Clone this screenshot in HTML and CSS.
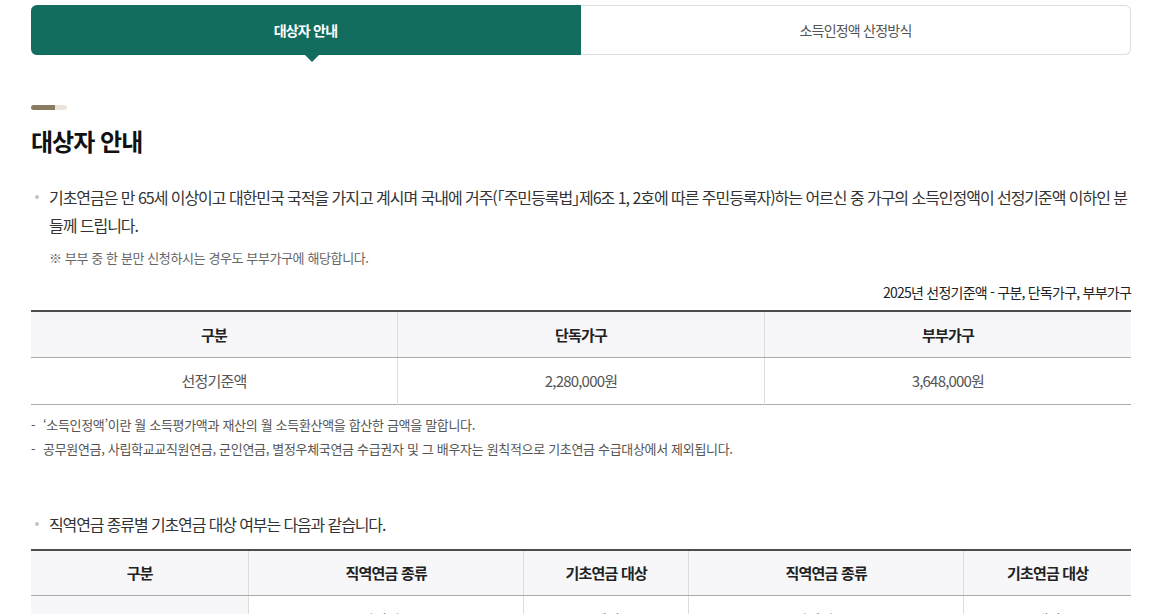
FILE: index.html
```html
<!DOCTYPE html>
<html lang="ko">
<head>
  <meta charset="UTF-8">
  <title>기초연금 대상자 안내</title>
  <meta name="viewport" content="width=device-width, initial-scale=1.0">
  <link rel="stylesheet" href="styles.css">
</head>
<body>
  <div class="wrap">
    <ul class="tabs">
      <li class="tab active">대상자 안내</li>
      <li class="tab">소득인정액 산정방식</li>
    </ul>

    <div class="section">
      <span class="deco"></span>
      <h2 class="title">대상자 안내</h2>

      <ul class="dot-list">
        <li>기초연금은 만 65세 이상이고 대한민국 국적을 가지고 계시며 국내에 거주(「주민등록법」제6조 1, 2호에 따른 주민등록자)하는 어르신 중 가구의 소득인정액이 선정기준액 이하인 분들께 드립니다.</li>
      </ul>
      <p class="note">※ 부부 중 한 분만 신청하시는 경우도 부부가구에 해당합니다.</p>

      <p class="caption">2025년 선정기준액 - 구분, 단독가구, 부부가구</p>
      <table class="tbl">
        <thead>
          <tr>
            <th>구분</th>
            <th>단독가구</th>
            <th>부부가구</th>
          </tr>
        </thead>
        <tbody>
          <tr>
            <td>선정기준액</td>
            <td>2,280,000원</td>
            <td>3,648,000원</td>
          </tr>
        </tbody>
      </table>
      <ul class="dash-list">
        <li>‘소득인정액’이란 월 소득평가액과 재산의 월 소득환산액을 합산한 금액을 말합니다.</li>
        <li>공무원연금, 사립학교교직원연금, 군인연금, 별정우체국연금 수급권자 및 그 배우자는 원칙적으로 기초연금 수급대상에서 제외됩니다.</li>
      </ul>

      <ul class="dot-list second">
        <li>직역연금 종류별 기초연금 대상 여부는 다음과 같습니다.</li>
      </ul>
      <table class="tbl tbl-five">
        <colgroup>
          <col style="width: 19.8%">
          <col style="width: 25%">
          <col style="width: 15%">
          <col style="width: 25%">
          <col style="width: 15.2%">
        </colgroup>
        <thead>
          <tr>
            <th>구분</th>
            <th>직역연금 종류</th>
            <th>기초연금 대상</th>
            <th>직역연금 종류</th>
            <th>기초연금 대상</th>
          </tr>
        </thead>
        <tbody>
          <tr>
            <th class="row-head" rowspan="2">본인</th>
            <td>퇴직연금</td>
            <td>제외</td>
            <td>퇴직일시금</td>
            <td>대상</td>
          </tr>
          <tr>
            <td>장해연금</td>
            <td>제외</td>
            <td>장해일시금</td>
            <td>대상</td>
          </tr>
        </tbody>
      </table>
    </div>
  </div>
</body>
</html>
```

FILE: styles.css
```css
* {
  box-sizing: border-box;
}
body {
  margin: 0;
  background: #fff;
  color: #333;
  font-family: "Noto Sans CJK KR", "Noto Sans", sans-serif;
  letter-spacing: -0.05em;
}
ul {
  margin: 0;
  padding: 0;
  list-style: none;
}
p {
  margin: 0;
}
.wrap {
  width: 1100px;
  margin-left: 31px;
  padding-top: 5px;
}

/* tabs */
.tabs {
  display: flex;
}
.tab {
  flex: 1;
  height: 50px;
  display: flex;
  align-items: center;
  justify-content: center;
  font-size: 14px;
  color: #555;
  letter-spacing: -0.055em;
  border: 1px solid #ddd;
  border-left: none;
  border-radius: 0 6px 6px 0;
}
.tab.active {
  position: relative;
  background: #136d5e;
  border-color: #136d5e;
  border-radius: 6px 0 0 6px;
  color: #fff;
  font-weight: 700;
}
.tab.active::after {
  content: "";
  position: absolute;
  left: 50%;
  top: 100%;
  margin-left: 6px;
  border-left: 8px solid transparent;
  border-right: 8px solid transparent;
  border-top: 8px solid #136d5e;
  transform: translateX(-50%);
}

/* heading */
.section {
  padding-top: 50px;
}
.deco {
  display: block;
  width: 36px;
  height: 5px;
  border-radius: 3px;
  background: linear-gradient(90deg, #8b7b63 0 66%, #ece4d8 66% 100%);
}
.title {
  margin: 14px 0 0;
  font-size: 24px;
  line-height: 34px;
  font-weight: 700;
  color: #111;
  letter-spacing: -0.04em;
}

/* lists */
.dot-list {
  margin-top: 25px;
}
.dot-list li {
  position: relative;
  padding-left: 18px;
  font-size: 16px;
  line-height: 28px;
  color: #333;
  letter-spacing: -0.065em;
  font-feature-settings: "halt";
}
.dot-list li::before {
  content: "";
  position: absolute;
  left: 4px;
  top: 12px;
  width: 4px;
  height: 4px;
  border-radius: 50%;
  background: #c4c4c4;
}
.dot-list.second {
  margin-top: 49px;
}
.dot-list.second li {
  letter-spacing: -0.07em;
}
.note {
  margin-top: 9px;
  padding-left: 18px;
  font-size: 13px;
  line-height: 20px;
  color: #666;
  letter-spacing: -0.03em;
}
.caption {
  margin-top: 14px;
  text-align: right;
  font-size: 14px;
  line-height: 20px;
  color: #222;
  letter-spacing: -0.055em;
}

/* tables */
.tbl {
  width: 100%;
  margin-top: 8px;
  border-collapse: collapse;
  table-layout: fixed;
  border-top: 2px solid #4d4d4d;
  border-bottom: 1px solid #aaa;
}
.tbl th,
.tbl td {
  height: 47px;
  padding: 0 10px;
  text-align: center;
  font-size: 15px;
  border-left: 1px solid #ddd;
}
.tbl th:first-child,
.tbl td:first-child {
  border-left: none;
}
.tbl thead th {
  height: 46px;
  background: #f7f7f9;
  color: #222;
  font-weight: 700;
  border-bottom: 1px solid #aaa;
}
.tbl td {
  color: #555;
}
.tbl tbody tr + tr td {
  border-top: 1px solid #ddd;
}
.tbl .row-head {
  background: #f7f7f9;
  color: #222;
  font-weight: 400;
  border-left: none;
}
.tbl-five {
  margin-top: 11px;
}

.dash-list {
  margin-top: 8px;
}
.dash-list li {
  position: relative;
  padding-left: 12px;
  font-size: 13px;
  line-height: 24px;
  color: #555;
  letter-spacing: -0.025em;
}
.dash-list li::before {
  content: "-";
  position: absolute;
  left: 0;
}
```
